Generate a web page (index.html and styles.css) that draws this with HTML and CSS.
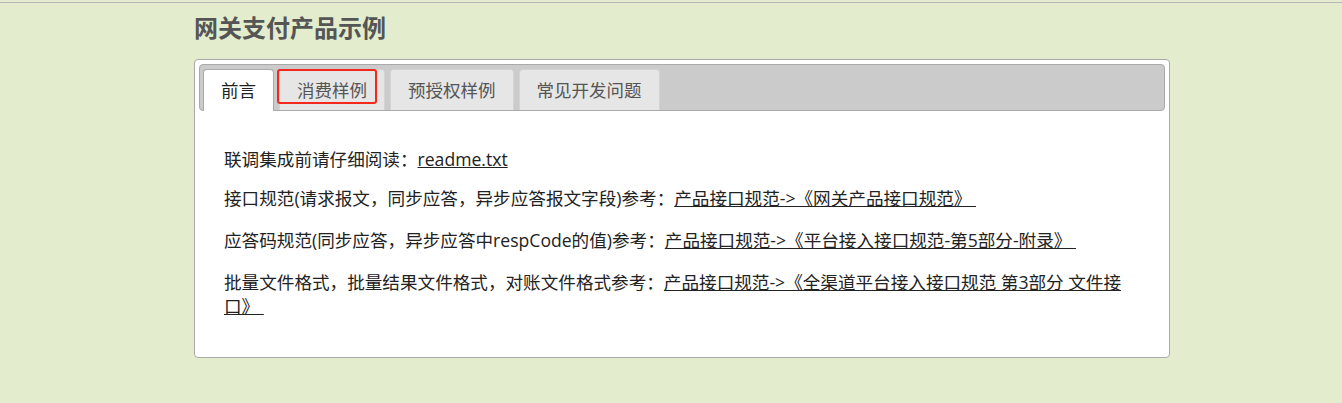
FILE: index.html
```html
<!DOCTYPE html>
<html lang="zh-CN">
<head>
    <meta charset="UTF-8">
    <title>网关支付产品示例</title>
    <link rel="stylesheet" href="styles.css">
</head>
<body>
    <div class="container">
        <h2 class="title">网关支付产品示例</h2>

        <div class="tabs">
            <ul class="tabs-nav">
                <li class="tab active"><a href="#intro">前言</a></li>
                <li class="tab focused"><a href="#consume">消费样例</a></li>
                <li class="tab"><a href="#preauth">预授权样例</a></li>
                <li class="tab"><a href="#faq">常见开发问题</a></li>
            </ul>

            <!-- 前言 -->
            <div class="tab-panel" id="intro">
                <p class="first">联调集成前请仔细阅读：<a href="#">readme.txt</a></p>
                <p>接口规范(请求报文，同步应答，异步应答报文字段)参考：<a href="#">产品接口规范-&gt;《网关产品接口规范》&nbsp;</a></p>
                <p>应答码规范(同步应答，异步应答中respCode的值)参考：<a href="#">产品接口规范-&gt;《平台接入接口规范-第5部分-附录》&nbsp;</a></p>
                <p>批量文件格式，批量结果文件格式，对账文件格式参考：<a href="#">产品接口规范-&gt;《全渠道平台接入接口规范 第3部分 文件接口》&nbsp;</a></p>
            </div>
        </div>
    </div>
</body>
</html>
```

FILE: styles.css
```css
body {
    margin: 2px 0 0;
    border-top: 1px solid #b8b8b8;
    background: #e3edcd;
    font-family: "Open Sans", "Noto Sans CJK SC", sans-serif;
    color: #222;
}
.container {
    width: 976px;
    margin-left: 194px;
}
.title {
    margin: 9px 0 15px;
    font-size: 24px;
    line-height: 32px;
    font-weight: bold;
    color: #555;
}
.tabs {
    background: #fff;
    border: 1px solid #aaa;
    border-radius: 4px;
    padding: 4px;
}
.tabs-nav {
    display: flex;
    gap: 5px;
    margin: 0;
    padding: 4px 3px 0;
    list-style: none;
    background: #cbcbcb;
    border: 1px solid #aaa;
    border-radius: 4px;
}
.tab {
    position: relative;
    background: #e6e6e6;
    border: 1px solid #d3d3d3;
    border-bottom: 0;
    border-radius: 4px 4px 0 0;
}
.tab a {
    display: block;
    padding: 0 17px;
    font-size: 17.5px;
    line-height: 40px;
    color: #555;
    text-decoration: none;
}
.tab.active {
    background: #fff;
    border-color: #aaa;
    margin-bottom: -1px;
    padding-bottom: 1px;
}
.tab.active a {
    color: #212121;
}
/* marco rojo de foco sobre la pestaña */
.tab.focused::after {
    content: "";
    position: absolute;
    left: -3px;
    top: -1px;
    width: 96px;
    height: 31px;
    border: 2px solid #f4281c;
    border-radius: 3px;
}
.tab-panel {
    padding: 36px 25px 17px;
    font-size: 17.6px;
}
.tab-panel p {
    margin: 0 0 18px;
    line-height: 24px;
}
.tab-panel p.first {
    margin-bottom: 15px;
}
.tab-panel a {
    color: #222;
    text-decoration: underline;
}
```
